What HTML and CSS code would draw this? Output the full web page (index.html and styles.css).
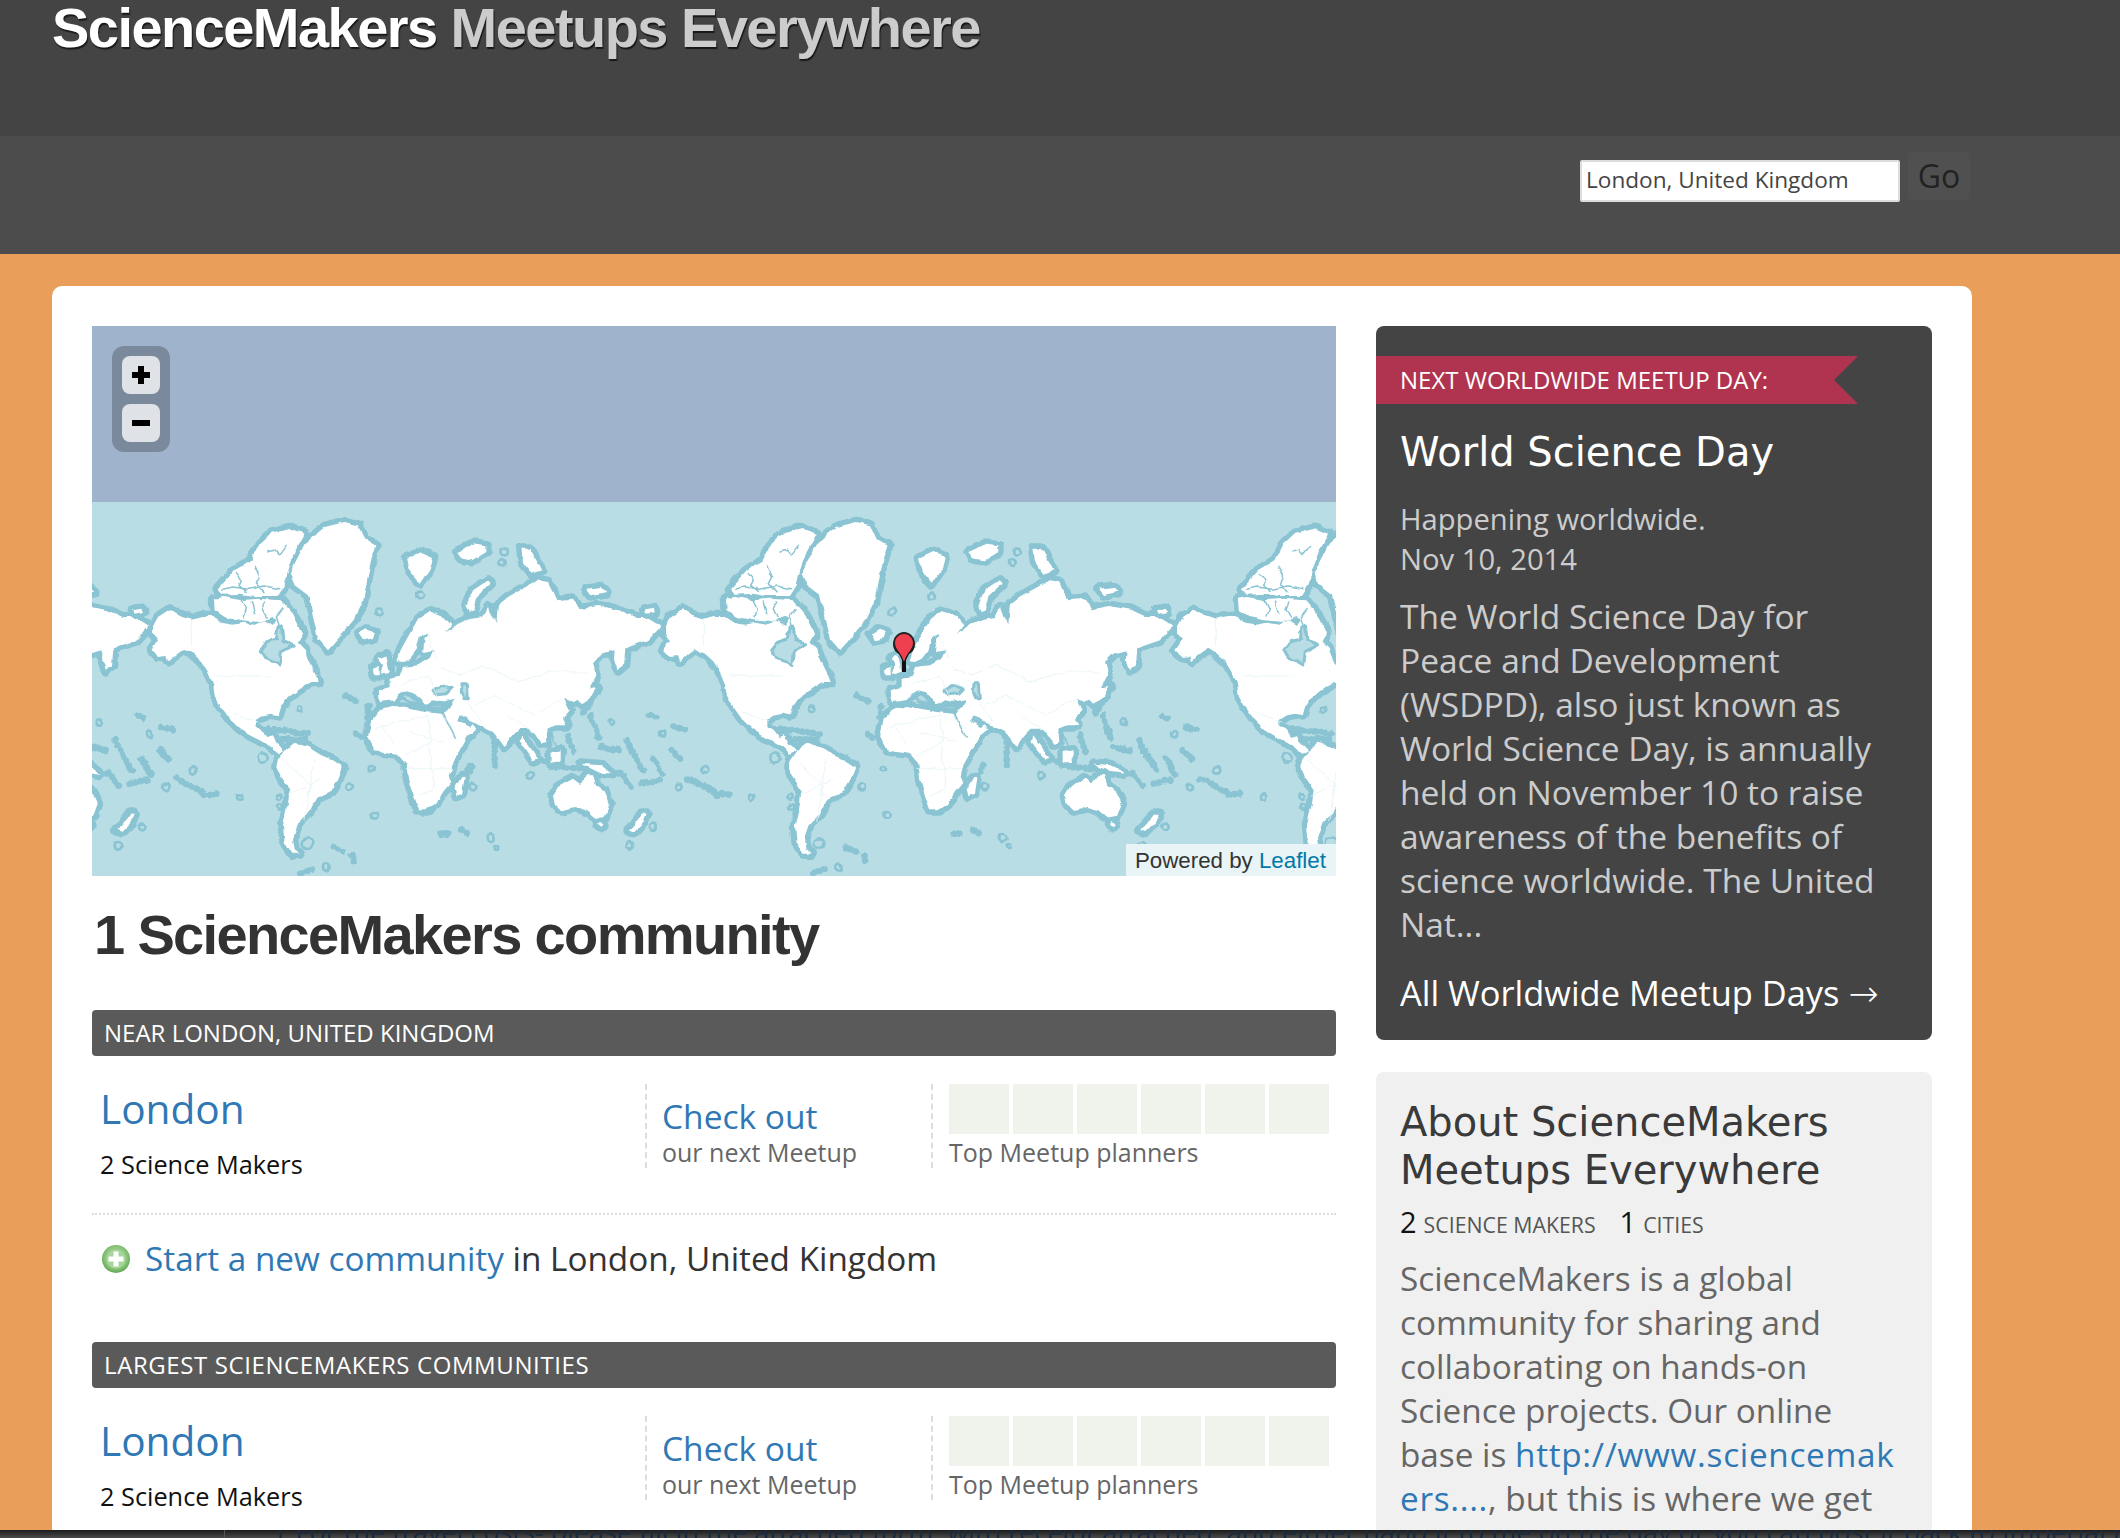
FILE: index.html
```html
<!DOCTYPE html>
<html lang="en">
<head>
<meta charset="utf-8">
<title>ScienceMakers Meetups Everywhere</title>
<link rel="stylesheet" href="styles.css">
</head>
<body>
<header class="top">
  <div class="brand"><span class="brand-a">ScienceMakers</span> <span class="brand-b">Meetups Everywhere</span></div>
</header>
<div class="sub">
  <form class="search">
    <input class="search-input" type="text" value="London, United Kingdom">
    <button class="search-go" type="button">Go</button>
  </form>
</div>
<main class="card">
  <section class="left">
    <div class="map">
      <div class="sky"></div>
      <svg class="sea" viewBox="0 0 1244 374" width="1244" height="374" aria-hidden="true">
        <defs>
          <filter id="rough" filterUnits="userSpaceOnUse" x="0" y="0" width="1244" height="374">
            <feTurbulence type="fractalNoise" baseFrequency="0.09" numOctaves="2" seed="4" result="n"/>
            <feDisplacementMap in="SourceGraphic" in2="n" scale="5" xChannelSelector="R" yChannelSelector="G" result="d"/>
            <feGaussianBlur in="d" stdDeviation="0.55"/>
          </filter>
          <g id="land">
            <path d="M135,372 L150,345 L185,322 L215,338 L250,350 L285,342 L310,342 L340,362 L375,368 L405,362 L440,368 L470,355 L495,372 L510,345 L535,365 L540,395 L565,415 L590,440 L605,480 L620,510 L632,540 L610,540 L585,555 L560,572 L535,590 L520,612 L512,640 L490,635 L465,640 L442,655 L442,675 L462,685 L478,705 L495,700 L505,722 L528,745 L510,755 L490,735 L455,715 L425,700 L395,680 L365,650 L340,615 L320,580 L315,545 L300,510 L280,478 L255,455 L225,440 L205,455 L180,478 L175,462 L150,465 L130,445 L150,415 L135,395 Z"/>
            <path d="M545,215 L565,175 L590,125 L650,75 L710,60 L750,70 L770,115 L805,130 L790,175 L780,220 L765,300 L740,350 L690,410 L660,445 L630,410 L610,320 L600,280 L560,250 Z"/>
            <path d="M330,262 L380,205 L430,175 L455,125 L490,92 L545,78 L590,95 L560,150 L540,205 L530,250 L510,282 L440,282 L395,275 L345,278 Z"/>
            <path d="M318,290 L345,285 L400,295 L450,290 L520,295 L555,335 L585,395 L570,425 L540,400 L525,365 L490,345 L455,360 L400,355 L350,345 L320,325 Z"/>
            <path d="M868,478 L880,440 L905,395 L930,350 L965,328 L1005,340 L1030,370 L1010,395 L1050,365 L1090,350 L1125,345 L1140,315 L1150,345 L1165,365 L1170,310 L1200,285 L1240,262 L1290,235 L1320,240 L1338,275 L1345,295 L1395,290 L1415,322 L1470,312 L1536,325 L1580,345 L1616,345 L1660,372 L1620,415 L1570,432 L1552,440 L1548,490 L1530,505 L1518,470 L1520,445 L1480,455 L1455,480 L1465,520 L1445,560 L1420,585 L1395,600 L1368,590 L1385,625 L1365,650 L1375,670 L1340,670 L1315,680 L1318,720 L1300,725 L1280,695 L1260,680 L1235,680 L1215,700 L1190,735 L1175,715 L1155,690 L1110,668 L1085,655 L1105,680 L1075,705 L1040,712 L1025,680 L1005,640 L1030,605 L1040,590 L1000,600 L975,595 L950,612 L935,590 L915,570 L895,565 L875,575 L860,595 L815,600 L812,565 L845,555 L845,530 L875,525 L885,495 L930,490 L965,470 L975,445 L945,450 L950,410 L960,395 L935,405 L925,445 L905,470 L885,480 Z"/>
            <path d="M790,655 L815,625 L860,612 L905,620 L950,630 L1000,635 L1015,660 L1040,712 L1065,705 L1080,700 L1055,745 L1030,790 L1022,825 L1030,840 L1005,870 L985,905 L955,925 L930,925 L915,880 L900,830 L895,785 L870,755 L830,750 L800,745 L780,705 Z"/>
            <path d="M510,775 L530,745 L560,722 L600,735 L640,760 L675,775 L705,795 L690,835 L670,870 L625,890 L600,935 L570,965 L555,1010 L560,1045 L575,1055 L550,1055 L530,1020 L525,970 L540,905 L545,865 L515,820 L505,795 Z"/>
            <path d="M1335,880 L1350,855 L1395,830 L1415,845 L1435,820 L1455,820 L1465,850 L1490,870 L1505,905 L1490,945 L1465,950 L1435,925 L1400,915 L1360,925 L1340,905 Z"/>
            <path d="M45,965 L65,935 L80,935 L70,960 L40,990 L25,985 Z"/>
            <path d="M1040,860 L1060,825 L1070,825 L1062,875 L1045,882 Z"/>
            <path d="M752,395 L775,382 L800,390 L795,408 L765,415 Z"/>
            <path d="M812,470 L835,460 L845,510 L815,515 L825,490 Z"/>
            <path d="M795,500 L812,495 L812,520 L797,520 Z"/>
            <path d="M897,170 L940,150 L975,165 L965,200 L935,245 L910,215 Z"/>
            <path d="M1045,150 L1100,125 L1135,130 L1135,150 L1095,175 L1060,170 Z"/>
            <path d="M1075,310 L1095,265 L1140,235 L1148,245 L1105,285 L1095,325 L1085,330 Z"/>
            <path d="M1240,140 L1265,140 L1300,205 L1270,215 L1245,180 Z"/>
            <path d="M1435,260 L1480,255 L1495,270 L1450,280 Z"/>
            <path d="M75,325 L100,320 L105,330 L80,335 Z"/>
            <path d="M1405,590 L1440,560 L1468,555 L1450,585 L1420,605 Z"/>
            <path d="M1240,700 L1290,770 L1275,775 L1235,720 Z"/>
            <path d="M1328,750 L1358,745 L1358,780 L1328,785 Z"/>
            <path d="M1420,785 L1480,790 L1510,815 L1470,810 Z"/>
            <path d="M1478,960 L1486,968 L1478,976 L1470,968 Z"/>
          </g>
          <g id="world" transform="scale(.33333)">
            <g class="chain">
              <path d="M20,715 L50,770 L75,810 M0,810 L40,860 M65,845 L130,830 M100,770 L130,820 M155,745 L190,780 M205,830 L285,870 M290,878 L325,875 M90,640 L120,655 M160,675 L195,682"/>
              <path d="M1240,690 L1290,770 L1350,795 L1440,800 L1536,815 M1380,700 L1400,760 M1450,640 L1475,720 M1480,735 L1536,745 M1390,610 L1370,660 M1475,560 L1420,640"/>
              <path d="M712,580 L750,600 M782,612 L778,650 M742,695 L760,705 M1160,720 L1160,800 M1090,790 L1080,810 M1095,850 L1105,860"/>
              <path d="M1000,995 L1020,995 M1060,985 L1080,995 M675,1035 L710,1050 M730,1060 L740,1090 M580,1115 L620,1100 M480,680 L600,695 M505,712 L600,712"/>
            </g>
            <use href="#land" class="land-halo"/>
            <use href="#land" class="land-fill"/>
            <path class="inland" d="M455,445 L475,420 L505,410 L510,375 L520,372 L525,415 L560,428 L520,450 L515,490 L495,478 L470,470 Z"/>
            <path class="inland" d="M975,565 L1000,550 L1030,560 L1015,575 L985,578 Z"/>
            <path class="inland" d="M1062,545 L1075,545 L1078,590 L1068,590 L1060,570 Z"/>
            <path class="inland" d="M1060,645 L1090,665 L1085,670 L1055,655 Z"/>
            <path class="med" d="M880,585 L905,600 L950,612 L1000,612"/>
            <g class="canal">
              <path d="M385,215 L400,235 L392,250 L415,268 M440,190 L455,225 L445,245 L468,272 M480,150 L500,145 L512,160 L535,130 M400,295 L412,320 L405,345 M470,300 L462,320 L475,345 M430,300 L440,335 M525,320 L505,345 L515,375 L500,395 M345,262 L375,255 L420,262 L470,252 L515,260"/>
              <path d="M1005,635 L1042,708 M1330,690 L1345,735"/>
            </g>
            <g class="rings">
              <circle cx="815" cy="330" r="10"/><circle cx="575" cy="622" r="8"/><circle cx="465" cy="768" r="14"/>
              <circle cx="790" cy="800" r="8"/><circle cx="725" cy="855" r="10"/><circle cx="800" cy="940" r="10"/>
              <circle cx="1265" cy="820" r="10"/><circle cx="1190" cy="150" r="10"/><circle cx="1180" cy="182" r="10"/>
              <circle cx="255" cy="805" r="10"/><circle cx="175" cy="855" r="10"/><circle cx="100" cy="975" r="10"/>
              <circle cx="510" cy="885" r="8"/><circle cx="515" cy="915" r="8"/><circle cx="1148" cy="1008" r="12"/>
              <circle cx="655" cy="1095" r="10"/><circle cx="597" cy="1025" r="16"/><circle cx="935" cy="282" r="10"/>
              <circle cx="125" cy="695" r="8"/><circle cx="395" cy="885" r="8"/><circle cx="1510" cy="660" r="8"/>
              <circle cx="1095" cy="855" r="10"/><circle cx="1165" cy="1035" r="6"/><circle cx="30" cy="1030" r="10"/>
            </g>
            <g class="border">
              <path d="M250,350 L250,432 M330,522 L490,522 M370,630 L450,660 M520,770 L610,850 L590,960 M540,880 L640,830 M620,770 L600,880"/>
              <path d="M800,680 L900,650 L960,640 L970,720 L890,760 M820,670 L860,730 M960,720 L980,860 L930,880 M890,800 L1030,800 M900,690 L1010,720 M1000,640 L1045,680"/>
              <path d="M880,545 L960,520 L990,590 M1050,520 L1130,490 L1230,540 L1330,510 L1440,510 M1100,610 L1160,580 L1280,640 L1365,590 M1080,600 L1120,660 M1200,640 L1280,690 M960,400 L985,470 M1000,500 L1060,520"/>
            </g>
          </g>
        </defs>
        <g class="tiles">
          <use href="#world" x="-496"/>
          <use href="#world" x="16"/>
          <use href="#world" x="528"/>
          <use href="#world" x="1040"/>
        </g>
        <path class="pin" d="M812,153 C804,153 801,147 801,142 C801,135 806,130 812,130 C818,130 823,135 823,142 C823,147 820,153 812,153 Z"/>
        <path class="pin-stem" d="M806,150 L810,158 L810,170 L814,170 L814,158 L818,150 Z"/>
        <path class="pin-head" d="M812,132 C817,132 821,136 821,141 C821,147 814,152 812,160 C810,152 803,147 803,141 C803,136 807,132 812,132 Z"/>
      </svg>
      <div class="zoom">
        <div class="zoom-btn"><svg viewBox="0 0 18 18" width="18" height="18"><path d="M6,0 H12 V6 H18 V12 H12 V18 H6 V12 H0 V6 H6 Z"/></svg></div>
        <div class="zoom-btn"><svg viewBox="0 0 18 18" width="18" height="18"><path d="M0,6 H18 V12 H0 Z"/></svg></div>
      </div>
      <div class="attrib">Powered by <a class="attrib-link" href="#">Leaflet</a></div>
    </div>

    <h1 class="count">1 ScienceMakers community</h1>

    <h2 class="bar">NEAR LONDON, UNITED KINGDOM</h2>
    <div class="row row-line">
      <div class="city">
        <a class="city-name" href="#">London</a>
        <div class="city-count">2 Science Makers</div>
      </div>
      <div class="next">
        <a class="next-link" href="#">Check out</a>
        <div class="caption">our next Meetup</div>
      </div>
      <div class="planners">
        <div class="squares"><i class="square"></i><i class="square"></i><i class="square"></i><i class="square"></i><i class="square"></i><i class="square"></i></div>
        <div class="caption">Top Meetup planners</div>
      </div>
    </div>
    <div class="start">
      <svg class="start-icon" viewBox="0 0 28 28" width="28" height="28" aria-hidden="true">
        <defs><radialGradient id="g1" cx="50%" cy="45%" r="55%"><stop offset="0" stop-color="#b4dca8"/><stop offset=".7" stop-color="#8cc67e"/><stop offset="1" stop-color="#5fa653"/></radialGradient></defs>
        <circle cx="14" cy="14" r="14" fill="url(#g1)"/>
        <circle cx="14" cy="14" r="9.5" fill="#a6d69a"/>
        <path d="M11.5,6.5 H16.5 V11.5 H21.5 V16.5 H16.5 V21.5 H11.5 V16.5 H6.5 V11.5 H11.5 Z" fill="#fff"/>
      </svg>
      <span><a class="start-link" href="#">Start a new community</a> in London, United Kingdom</span>
    </div>

    <h2 class="bar bar-wide">LARGEST SCIENCEMAKERS COMMUNITIES</h2>
    <div class="row">
      <div class="city">
        <a class="city-name" href="#">London</a>
        <div class="city-count">2 Science Makers</div>
      </div>
      <div class="next">
        <a class="next-link" href="#">Check out</a>
        <div class="caption">our next Meetup</div>
      </div>
      <div class="planners">
        <div class="squares"><i class="square"></i><i class="square"></i><i class="square"></i><i class="square"></i><i class="square"></i><i class="square"></i></div>
        <div class="caption">Top Meetup planners</div>
      </div>
    </div>
  </section>

  <aside class="side">
    <div class="day">
      <div class="ribbon">NEXT WORLDWIDE MEETUP DAY:</div>
      <h3 class="day-title">World Science Day</h3>
      <p class="day-when">Happening worldwide.<br>Nov 10, 2014</p>
      <p class="day-desc">The World Science Day for Peace and Development (WSDPD), also just known as World Science Day, is annually held on November 10 to raise awareness of the benefits of science worldwide. The United Nat...</p>
      <a class="day-all" href="#">All Worldwide Meetup Days <span class="arrow">→</span></a>
    </div>
    <div class="about">
      <h3 class="about-title">About ScienceMakers Meetups Everywhere</h3>
      <div class="stats"><b class="stat-num">2</b><span class="stat-label">SCIENCE MAKERS</span><b class="stat-num stat-second">1</b><span class="stat-label">CITIES</span></div>
      <p class="about-text">ScienceMakers is a global community for sharing and collaborating on hands-on Science projects. Our online base is <a class="about-link" href="#">http://www.sciencemakers....</a>, but this is where we get together in person.</p>
    </div>
  </aside>
</main>
<div class="overlap"><span class="overlap-text"><span class="overlap-num">1.</span> For the travel costs- please fill in the attached form, with receipt attached, and either hand it to me on the day or you can post it back to Imperial later on</span></div>
</body>
</html>
```

FILE: styles.css
```css
* { box-sizing: border-box; }
html, body { margin: 0; height: 100%; }
body {
  height: 1538px;
  overflow: hidden;
  background: #e99e5a;
  font-family: "Open Sans", "Liberation Sans", sans-serif;
  color: #333;
}
a { color: #2f78b4; text-decoration: none; }
p, h1, h2, h3 { margin: 0; }

.top { height: 136px; background: #444; padding-left: 52px; }
.brand {
  font: bold 56px/56px "Liberation Sans", Arial, sans-serif;
  letter-spacing: -1.55px;
  text-shadow: 1px 2px 1px rgba(0,0,0,.65);
  white-space: nowrap;
}
.brand-a { color: #fff; }
.brand-b { color: #ccc; }

.sub { height: 118px; background: #4c4c4c; display: flex; justify-content: flex-end; padding: 16px 150px 0 0; }
.search { display: flex; align-items: flex-start; gap: 8px; }
.search-input {
  width: 320px; height: 42px; margin-top: 8px; padding: 0 4px 3px;
  border: 2px solid #ddd; border-radius: 2px; background: #fff;
  font: 22.6px "Open Sans", sans-serif; color: #444;
}
.search-go {
  width: 62px; height: 48px; padding: 0; border: 0; border-radius: 4px;
  background: #505050; color: #222;
  font: 32px/48px "Open Sans", sans-serif;
}

.card {
  width: 1920px; height: 1400px; margin: 32px 0 0 52px; padding: 40px;
  background: #fff; border-radius: 10px 10px 0 0;
  display: grid; grid-template-columns: 1244px 556px; column-gap: 40px; align-items: start;
}

.map { position: relative; height: 550px; overflow: hidden; background: #b9dde5; }
.sky { height: 176px; background: #a0b3cc; }
.sea { display: block; }
.tiles { filter: url(#rough); }
.land-halo { fill: #8ac4d3; stroke: #8ac4d3; stroke-width: 32; stroke-linejoin: round; }
.land-fill { fill: #fff; stroke: none; }
.inland { fill: #b9dde5; stroke: #8ac4d3; stroke-width: 9; stroke-linejoin: round; }
.med { fill: none; stroke: #8ac4d3; stroke-width: 9; stroke-linecap: round; }
.canal path { fill: none; stroke: #8ac4d3; stroke-width: 4.5; stroke-linecap: round; stroke-linejoin: round; }
.chain path { fill: none; stroke: #8ac4d3; stroke-width: 20; stroke-linecap: round; stroke-dasharray: 1 16; }
.rings circle { fill: #b9dde5; stroke: #8ac4d3; stroke-width: 8; }
.border path { fill: none; stroke: #e6f3f6; stroke-width: 2.5; stroke-linejoin: round; }
.pin { fill: #222; }
.pin-stem { fill: #111; }
.pin-head { fill: #ef4050; }

.zoom {
  position: absolute; left: 20px; top: 20px; width: 58px; height: 106px;
  padding: 10px; border-radius: 12px; background: #7a899b;
  display: flex; flex-direction: column; gap: 10px;
}
.zoom-btn {
  width: 38px; height: 38px; border-radius: 8px; background: #dfe2e7;
  display: flex; align-items: center; justify-content: center;
}
.zoom-btn svg { fill: #000; }
.attrib {
  position: absolute; right: 0; bottom: 0; width: 210px; height: 32px; padding-left: 9px;
  background: #e9f4f6; color: #333;
  font: 22.3px/34px "Liberation Sans", Arial, sans-serif; white-space: nowrap;
}
.attrib-link { color: #0078a8; }

.count {
  margin: 27px 0 43px; padding-left: 2px;
  font: bold 56px/64px "Liberation Sans", Arial, sans-serif;
  letter-spacing: -1.65px; color: #333; white-space: nowrap;
}
.bar {
  height: 46px; padding-left: 12px; border-radius: 4px; background: #5a5a5a; color: #fff;
  font: 400 24px/46px "Open Sans", sans-serif; white-space: nowrap;
}
.bar-wide { letter-spacing: .6px; }
.row {
  margin-top: 28px; height: 131px;
  display: grid; grid-template-columns: 553px 286px 405px; align-items: start;
}
.row-line { border-bottom: 2px dotted #ddd; }
.city { padding: 1px 0 0 8px; }
.city-name { display: block; font-size: 40.6px; line-height: 48px; }
.city-count { margin-top: 16px; color: #111; font-size: 25.3px; line-height: 30px; }
.next, .planners { height: 84px; border-left: 2px dashed #ddd; padding-left: 16px; }
.next { padding-top: 12px; }
.next-link { display: block; font-size: 33.5px; line-height: 40px; margin-left: -1px; }
.next .caption { margin-top: 1px; margin-left: -1px; }
.caption { color: #666; font-size: 25px; line-height: 30px; white-space: nowrap; }
.squares { display: flex; gap: 4px; margin-bottom: 3px; }
.square { width: 60px; height: 50px; background: #f0f2ec; }

.start {
  display: flex; align-items: center; gap: 15px;
  margin: 21px 0 62px; padding-left: 10px; height: 44px;
  font-size: 33.3px; line-height: 44px; color: #333; white-space: nowrap;
}
.start-icon { flex: none; margin-top: 1px; }

.day { height: 714px; padding-top: 30px; background: #444; border-radius: 8px; color: #ccc; }
.ribbon {
  width: 482px; height: 48px; padding-left: 24px;
  background: #b0344f;
  clip-path: polygon(0 0, 100% 0, 458px 50%, 100% 100%, 0 100%);
  color: #fff; font-size: 24px; line-height: 48px; white-space: nowrap;
}
.day-title { margin: 21px 24px 0; color: #fff; font: 400 40px/54px "DejaVu Sans", sans-serif; white-space: nowrap; }
.day-when { margin: 20px 24px 0; font-size: 29.2px; line-height: 40px; }
.day-desc { margin: 15px 42px 0 24px; font-size: 33.5px; line-height: 44px; }
.day-all { display: block; margin: 25px 24px 0; color: #fff; font-size: 34.4px; line-height: 44px; white-space: nowrap; }
.arrow { font-family: "DejaVu Sans", sans-serif; font-size: 36px; font-weight: 200; }

.about { margin-top: 32px; padding: 26px 24px 0; height: 800px; background: #f0f0f0; border-radius: 8px; }
.about-title { color: #3a3a3a; font: 400 40px/48px "DejaVu Sans", sans-serif; }
.stats { margin-top: 10px; line-height: 36px; white-space: nowrap; }
.stat-num { color: #111; font-weight: 400; font-size: 29px; margin-right: 7px; }
.stat-label { color: #555; font-size: 21.3px; }
.stat-second { margin-left: 24px; }
.about-text { margin-top: 11px; color: #666; font-size: 33.3px; line-height: 44px; }
.about-link { color: #2f78b4; word-break: break-all; letter-spacing: .7px; }

.overlap {
  position: fixed; left: 0; right: 0; bottom: 0; height: 8px; overflow: hidden;
  background: linear-gradient(#1c1c1c, #4a4a4a);
  padding-left: 272px;
}
.overlap::before { content: ""; position: absolute; left: 224px; top: 0; bottom: 0; width: 1px; background: #555; }
.overlap-text {
  display: block; margin-top: -13px; white-space: nowrap;
  font: 27px/30px "Open Sans", sans-serif; color: #1a2b3f;
}
.overlap-num { margin-right: -6px; }
```
